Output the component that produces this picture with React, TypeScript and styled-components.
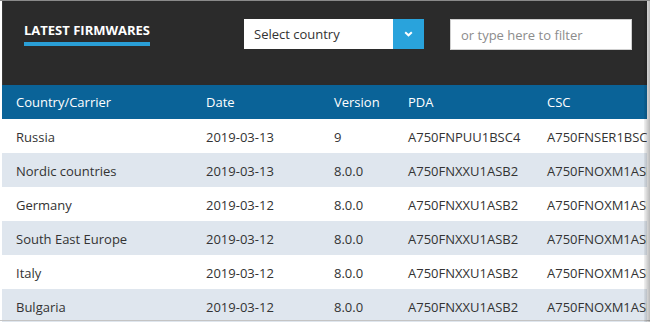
import React from "react";
import styled, { createGlobalStyle } from "styled-components";

const Global = createGlobalStyle`
  html, body { margin: 0; padding: 0; background: #ffffff; }
  body { font-family: "Open Sans", "Liberation Sans", sans-serif; font-size: 13px; color: #333; }
  * { box-sizing: border-box; }
`;

const Page = styled.div`
  width: 650px;
  height: 322px;
  overflow: hidden;
  position: relative;
  background: #ffffff;
  border-top: 1px solid #8a8a8a;
`;

const Panel = styled.div`
  width: 645px;
  margin-left: 2px;
  background: #2b2b2b;
  box-shadow: 1px 0 0 #3a3a3a inset;
`;

const Toolbar = styled.div`
  height: 84px;
  display: flex;
  align-items: flex-start;
  padding: 18px 0 0 22px;
`;

const TitleBlock = styled.div`
  width: 220px;
  padding-top: 2px;
`;

const Title = styled.h1`
  margin: 0;
  display: inline-block;
  font-family: "Open Sans", "Liberation Sans", sans-serif;
  font-weight: 700;
  font-size: 13px;
  line-height: 16px;
  color: #ffffff;
  text-transform: uppercase;
  padding-bottom: 4px;
  border-bottom: 4px solid #2a9fd6;
`;

const SelectBox = styled.div`
  width: 180px;
  height: 30px;
  display: flex;
  background: #ffffff;
`;

const SelectLabel = styled.div`
  flex: 1;
  padding-left: 10px;
  line-height: 31px;
  font-size: 13px;
  color: #333;
`;

const SelectButton = styled.div`
  width: 31px;
  height: 30px;
  background: #29a3dc;
  display: flex;
  align-items: center;
  justify-content: center;
`;

const FilterInput = styled.input`
  margin-left: 26px;
  width: 182px;
  height: 31px;
  border: 1px solid #cfcfcf;
  background: #ffffff;
  padding: 0 10px;
  font-family: "Open Sans", "Liberation Sans", sans-serif;
  font-size: 13px;
  color: #333;
  outline: none;
  &::placeholder { color: #8c8c8c; }
`;

const Table = styled.table`
  width: 100%;
  border-collapse: collapse;
  table-layout: fixed;
`;

const HeadRow = styled.tr`
  background: #0a6398;
  height: 34px;
`;

const Th = styled.th<{ $w?: number }>`
  width: ${(p) => (p.$w ? `${p.$w}px` : "auto")};
  text-align: left;
  font-weight: 400;
  font-size: 13px;
  color: #ffffff;
  padding: 0 0 0 14px;
  white-space: nowrap;
  overflow: hidden;
`;

const Row = styled.tr<{ $alt: boolean }>`
  height: 34px;
  background: ${(p) => (p.$alt ? "#dfe6ee" : "#ffffff")};
`;

const Td = styled.td`
  padding: 1px 0 0 14px;
  font-size: 13px;
  color: #333;
  white-space: nowrap;
  overflow: hidden;
`;

const Body = styled.div`
  background: #ffffff;
`;

const EdgeShadow = styled.div`
  position: absolute;
  top: 0;
  right: 0;
  width: 6px;
  height: 100%;
  background: linear-gradient(to right, rgba(0,0,0,0.05), rgba(0,0,0,0.28));
`;

const BottomLine = styled.div`
  position: absolute;
  left: 0;
  bottom: 1px;
  width: 100%;
  height: 1px;
  background: #c4c4c4;
`;

const rows = [
  ["Russia", "2019-03-13", "9", "A750FNPUU1BSC4", "A750FNSER1BSC4"],
  ["Nordic countries", "2019-03-13", "8.0.0", "A750FNXXU1ASB2", "A750FNOXM1ASB2"],
  ["Germany", "2019-03-12", "8.0.0", "A750FNXXU1ASB2", "A750FNOXM1ASB2"],
  ["South East Europe", "2019-03-12", "8.0.0", "A750FNXXU1ASB2", "A750FNOXM1ASB2"],
  ["Italy", "2019-03-12", "8.0.0", "A750FNXXU1ASB2", "A750FNOXM1ASB2"],
  ["Bulgaria", "2019-03-12", "8.0.0", "A750FNXXU1ASB2", "A750FNOXM1ASB2"],
];

export default function App() {
  return (
    <>
      <Global />
      <Page>
        <Panel>
          <Toolbar>
            <TitleBlock>
              <Title>Latest Firmwares</Title>
            </TitleBlock>
            <SelectBox>
              <SelectLabel>Select country</SelectLabel>
              <SelectButton>
                <svg width="9" height="6" viewBox="0 0 9 6">
                  <polyline points="1.2,1.2 4.5,4.3 7.8,1.2" fill="none" stroke="#ffffff" strokeWidth="2" />
                </svg>
              </SelectButton>
            </SelectBox>
            <FilterInput placeholder="or type here to filter" />
          </Toolbar>
          <Body>
            <Table>
              <thead>
                <HeadRow>
                  <Th $w={190}>Country/Carrier</Th>
                  <Th $w={128}>Date</Th>
                  <Th $w={74}>Version</Th>
                  <Th $w={139}>PDA</Th>
                  <Th>CSC</Th>
                </HeadRow>
              </thead>
              <tbody>
                {rows.map((r, i) => (
                  <Row key={i} $alt={i % 2 === 1}>
                    {r.map((c, j) => (
                      <Td key={j}>{c}</Td>
                    ))}
                  </Row>
                ))}
              </tbody>
            </Table>
          </Body>
        </Panel>
        <BottomLine />
        <EdgeShadow />
      </Page>
    </>
  );
}
